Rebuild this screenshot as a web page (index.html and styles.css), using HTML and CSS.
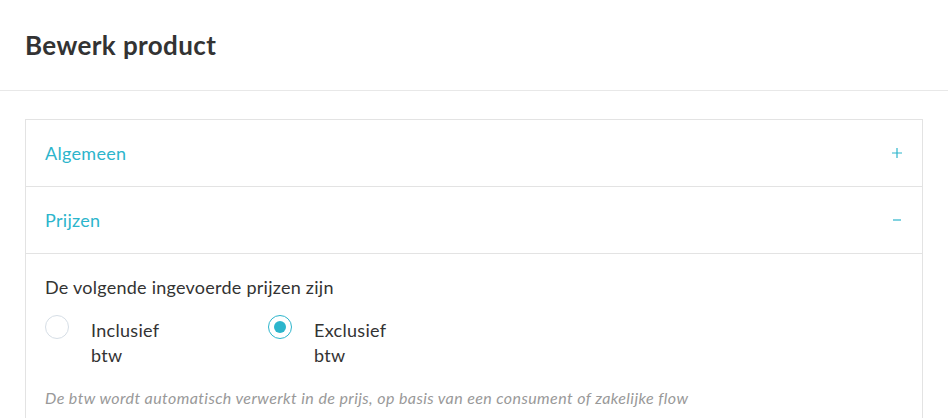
FILE: index.html
```html
<!DOCTYPE html>
<html lang="nl">
<head>
<meta charset="utf-8">
<title>Bewerk product</title>
<link rel="stylesheet" href="styles.css">
</head>
<body>
<header class="page-header">
  <h1 class="page-title">Bewerk product</h1>
</header>
<main class="page-content">
  <section class="accordion">
    <div class="acc-item">
      <div class="acc-head">
        <span class="acc-title">Algemeen</span>
        <svg class="acc-icon" width="10" height="10" viewBox="0 0 10 10"><path d="M5 0V10M0 5H10" stroke="currentColor" stroke-width="1.2"/></svg>
      </div>
    </div>
    <div class="acc-item">
      <div class="acc-head">
        <span class="acc-title">Prijzen</span>
        <svg class="acc-icon" width="10" height="10" viewBox="0 0 10 10"><path d="M1 5H9" stroke="currentColor" stroke-width="1.2"/></svg>
      </div>
      <div class="acc-body">
        <p class="field-label">De volgende ingevoerde prijzen zijn</p>
        <div class="radio-group">
          <label class="radio">
            <span class="radio-dot"></span>
            <span class="radio-text">Inclusief<br>btw</span>
          </label>
          <label class="radio checked">
            <span class="radio-dot"></span>
            <span class="radio-text">Exclusief<br>btw</span>
          </label>
        </div>
        <p class="hint">De btw wordt automatisch verwerkt in de prijs, op basis van een consument of zakelijke flow</p>
      </div>
    </div>
  </section>
</main>
</body>
</html>
```
FILE: styles.css
```css
* { box-sizing: border-box; }
html, body {
  margin: 0;
  padding: 0;
  background: #ffffff;
  font-family: Lato, "Open Sans", sans-serif;
  color: #333333;
}
.page-header {
  height: 91px;
  padding: 0 25px;
  display: flex;
  align-items: center;
  border-bottom: 1px solid #e8e8e8;
  background: #ffffff;
}
.page-title {
  margin: 0;
  font-size: 26px;
  letter-spacing: 0.4px;
  font-weight: 700;
  color: #333333;
  padding-bottom: 1px;
}
.page-content {
  padding: 28px 25px 0;
}
.accordion {
  border: 1px solid #e3e3e3;
  border-bottom: none;
  background: #ffffff;
}
.acc-item {
  border-bottom: 1px solid #e3e3e3;
}
.acc-head {
  height: 66px;
  padding: 0 20px 0 19px;
  display: flex;
  align-items: center;
  justify-content: space-between;
  color: #2cb5cc;
}
.acc-title {
  font-size: 18px;
  letter-spacing: 0.3px;
}
.acc-icon {
  color: #2cb5cc;
}
.acc-body {
  border-top: 1px solid #e3e3e3;
  padding: 23px 19px 20px;
}
.field-label {
  margin: 0;
  font-size: 18px;
  letter-spacing: 0.25px;
  line-height: 20px;
  color: #333333;
}
.radio-group {
  display: flex;
  margin-top: 18px;
}
.radio {
  display: flex;
  align-items: flex-start;
  width: 223px;
}
.radio-dot {
  width: 24px;
  height: 24px;
  border-radius: 50%;
  border: 1px solid #d6dee6;
  background: #ffffff;
  flex: none;
  margin-right: 22px;
  position: relative;
}
.radio.checked .radio-dot {
  border-color: #2cb5cc;
}
.radio.checked .radio-dot::after {
  content: "";
  position: absolute;
  left: 5px;
  top: 5px;
  width: 12px;
  height: 12px;
  border-radius: 50%;
  background: #2cb5cc;
}
.radio-text {
  font-size: 18px;
  letter-spacing: 0.3px;
  line-height: 25px;
  margin-top: 3px;
  color: #333333;
}
.hint {
  margin: 20px 0 0;
  font-size: 16px;
  letter-spacing: 0.4px;
  line-height: 20px;
  font-style: italic;
  color: #999999;
}
```
